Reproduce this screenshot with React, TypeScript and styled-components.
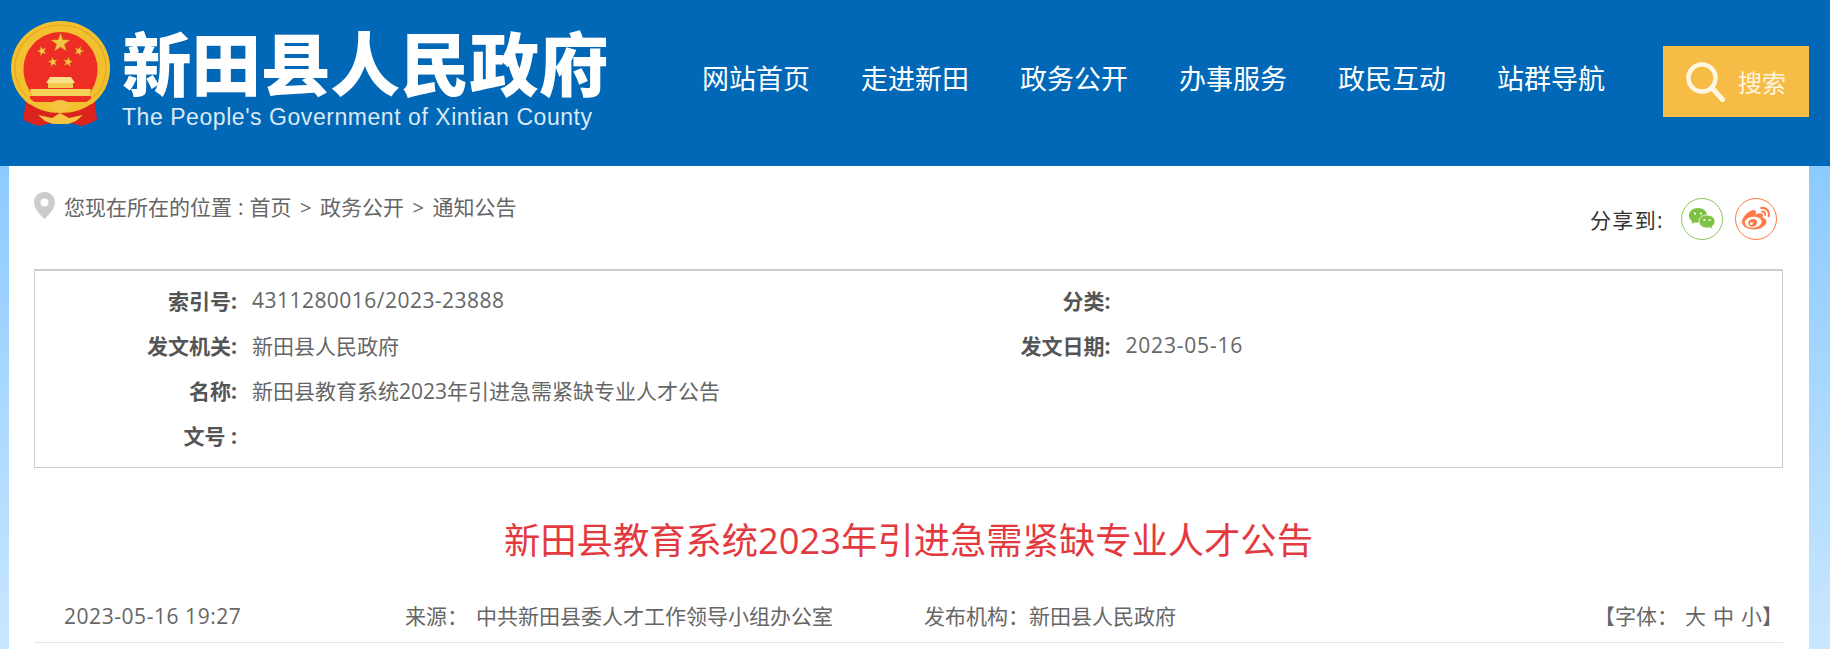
import React from 'react';
import styled, { createGlobalStyle } from 'styled-components';
import { FaWeibo } from 'react-icons/fa';

const GlobalStyle = createGlobalStyle`
  html, body {
    margin: 0;
    padding: 0;
    height: 100%;
    overflow: hidden;
  }
  body {
    font-family: "Open Sans", "Noto Sans CJK SC", sans-serif;
    background: linear-gradient(180deg, #8ccaff 0%, #8ccaff 166px, #c9e7ff 100%);
  }
`;

const Page = styled.div`
  min-height: 100vh;
  display: flex;
  flex-direction: column;
`;

const Header = styled.header`
  height: 166px;
  flex: none;
  background: #0068b7;
  display: flex;
  align-items: center;
`;

const Logo = styled.div`
  display: flex;
  align-items: flex-start;
  gap: 12px;
  margin: 0 0 16px 11px;
`;

const LogoText = styled.div`
  display: flex;
  flex-direction: column;
  padding-top: 4px;
`;

const LogoTitle = styled.div`
  font-family: "Noto Sans CJK SC", sans-serif;
  font-size: 69.5px;
  line-height: 72px;
  font-weight: 900;
  color: #fff;
  white-space: nowrap;
`;

const LogoSub = styled.div`
  margin-top: 8px;
  font-family: "Liberation Sans", sans-serif;
  font-size: 23px;
  line-height: 24px;
  letter-spacing: 0.55px;
  color: #dce9f4;
  white-space: nowrap;
`;

const Nav = styled.nav`
  margin: 0 58px 8px auto;
  display: flex;
  gap: 51px;
`;

const NavItem = styled.a`
  font-size: 27px;
  line-height: 36px;
  color: #fff;
  white-space: nowrap;
`;

const SearchButton = styled.div`
  width: 146px;
  height: 71px;
  margin: 0 21px 3px 0;
  background: #f6bc46;
  display: flex;
  align-items: center;
  padding-left: 23px;
  box-sizing: border-box;
  color: #fff6e2;
  font-size: 24px;
  gap: 13px;
`;

const Panel = styled.main`
  flex: 1;
  margin: 0 21px 0 9px;
  padding: 0 26px 0 25px;
  background: #fff;
`;

const TopRow = styled.div`
  height: 103px;
  display: flex;
  justify-content: space-between;
  align-items: flex-start;
`;

const Crumbs = styled.div`
  margin-top: 26px;
  display: flex;
  align-items: center;
  gap: 9px;
  height: 27px;
  font-size: 21px;
  color: #666;
  white-space: nowrap;
`;

const CrumbSep = styled.span`
  padding: 0 8.5px;
  font-size: 20px;
`;

const CrumbColon = styled.span`
  padding: 0 6px 0 6px;
`;

const Share = styled.div`
  margin: 32px 6px 0 0;
  display: flex;
  align-items: center;
  gap: 12px;
  font-size: 21px;
  color: #333;
`;

const ShareLabel = styled.span`
  margin-right: 5px;
  letter-spacing: 1.4px;
`;

const ShareCircle = styled.span<{ $color: string }>`
  width: 42px;
  height: 42px;
  box-sizing: border-box;
  border-radius: 50%;
  border: 1px solid ${props => props.$color};
  color: ${props => props.$color};
  display: flex;
  align-items: center;
  justify-content: center;
  font-size: 28px;
`;

const InfoBox = styled.section`
  height: 199px;
  box-sizing: border-box;
  border: 1px solid #ccc;
  border-top-width: 2px;
  padding-top: 6px;
  display: grid;
  grid-template-columns: 1fr 1fr;
  grid-auto-rows: 45px;
  font-size: 21px;
  color: #666;
`;

const InfoCell = styled.div`
  display: flex;
  align-items: center;
  gap: 15px;
  white-space: nowrap;
`;

const InfoCellWide = styled(InfoCell)`
  grid-column: 1 / 3;
`;

const InfoLabel = styled.span`
  width: 202px;
  flex: none;
  text-align: right;
  font-weight: 700;
  color: #555;
`;

const NumberText = styled.span<{ $spacing: number }>`
  letter-spacing: ${props => props.$spacing}px;
`;

const ArticleTitle = styled.h1`
  margin: 42px 0 0;
  font-size: 36.3px;
  line-height: 60px;
  font-weight: 400;
  text-align: center;
  color: #e33a3f;
`;

const MetaRow = styled.div`
  margin-top: 25px;
  height: 47px;
  padding-left: 30px;
  border-bottom: 1px solid #e5e5e5;
  display: grid;
  grid-template-columns: 341px 519px 1fr auto;
  line-height: 43px;
  font-size: 21px;
  color: #666;
  white-space: nowrap;
`;

const SourceLabel = styled.span`
  margin-right: 8px;
`;

const FontSize = styled.span`
  margin-left: 7px;
`;

const navItems = ['网站首页', '走进新田', '政务公开', '办事服务', '政民互动', '站群导航'];

const starPoints = (cx: number, cy: number, r: number, rotate = 0) => {
  const pts: string[] = [];
  for (let i = 0; i < 10; i++) {
    const rad = i % 2 === 0 ? r : r * 0.4;
    const a = ((-90 + rotate + i * 36) * Math.PI) / 180;
    pts.push(`${(cx + rad * Math.cos(a)).toFixed(2)},${(cy + rad * Math.sin(a)).toFixed(2)}`);
  }
  return pts.join(' ');
};

const Emblem = () => (
  <svg width="99" height="106" viewBox="11 22 99 106">
    {/* ribbons behind the ring */}
    <path d="M27 96 L23 121 L38 127 L60 122 L83 127 L97 121 L94 96 Z" fill="#dc241f" />
    {/* ring */}
    <path d="M60.5 22 C88 22 110 43 110 69 C110 84 103 97 92 105 L60.5 112 L29 105 C18 97 11 84 11 69 C11 43 33 22 60.5 22 Z" fill="#f3c02f" />
    <path d="M60.5 26 C85 26 106 45 106 69 C106 84 98 96 88 103" fill="none" stroke="#e5a823" strokeWidth="1.2" />
    <path d="M60.5 26 C36 26 15 45 15 69 C15 84 23 96 33 103" fill="none" stroke="#e5a823" strokeWidth="1.2" />
    <path d="M60.5 33 C81 33 97.5 50 97.5 70 C97.5 80 94 89 88 96 H33 C27 89 23.5 80 23.5 70 C23.5 50 40 33 60.5 33 Z" fill="#ee2d24" />
    {/* stars */}
    <polygon points={starPoints(60.5, 44, 10)} fill="#f5c542" stroke="#b5861e" strokeWidth="0.4" />
    <polygon points={starPoints(42, 52, 5, -20)} fill="#f5c542" stroke="#b5861e" strokeWidth="0.3" />
    <polygon points={starPoints(79, 52, 5, 20)} fill="#f5c542" stroke="#b5861e" strokeWidth="0.3" />
    <polygon points={starPoints(53, 63, 5, -10)} fill="#f5c542" stroke="#b5861e" strokeWidth="0.3" />
    <polygon points={starPoints(68, 63, 5, 10)} fill="#f5c542" stroke="#b5861e" strokeWidth="0.3" />
    {/* gate */}
    <path d="M50 78 H71 L75 84 H46 Z" fill="#fbe08a" />
    <rect x="48" y="84" width="25" height="5" fill="#f5c94f" />
    <path d="M30 90 H91 L89 97 H32 Z" fill="#f8d35a" />
    <rect x="30" y="97" width="61" height="6" fill="#ee2d24" />
    <path d="M27 97 C36 106 48 109 60.5 109 C73 109 85 106 94 97 L96 101 C85 111 73 114 60.5 114 C48 114 36 111 25 101 Z" fill="#f3c02f" />
    {/* flower and ties */}
    <ellipse cx="60" cy="107" rx="10" ry="6" fill="#f5c542" />
    <path d="M38 116 L52 119 L60 114 L69 119 L83 116 L76 122 L68 125 H53 L45 122 Z" fill="#f5c542" />
  </svg>
);

const SearchIcon = () => (
  <svg width="39" height="40" viewBox="0 0 39 40" fill="none" stroke="#fff6e2">
    <circle cx="16" cy="16" r="13.5" strokeWidth="4.5" />
    <path d="M26 26 L36.5 37.5" strokeWidth="5" strokeLinecap="round" />
  </svg>
);

const PinIcon = () => (
  <svg width="21" height="27" viewBox="0 0 21 27">
    <path
      fillRule="evenodd"
      d="M10.5 0 C4.7 0 0 4.6 0 10.4 C0 16.8 7 23.5 10.5 27 C14 23.5 21 16.8 21 10.4 C21 4.6 16.3 0 10.5 0 Z M10.5 6.5 A4 4 0 1 1 10.5 14.5 A4 4 0 1 1 10.5 6.5 Z"
      fill="#ccc"
    />
  </svg>
);

const WechatIcon = () => (
  <svg width="26" height="22" viewBox="0 0 26 22">
    <path d="M9 0 C4 0 0 3.2 0 7.4 C0 9.8 1.3 11.9 3.3 13.2 L2.6 16 L6 14.3 C7 14.6 8 14.8 9 14.8 C14 14.8 18 11.5 18 7.4 C18 3.2 14 0 9 0 Z" fill="#7dc242" />
    <circle cx="6" cy="5.6" r="1.1" fill="#fff" />
    <circle cx="12" cy="5.6" r="1.1" fill="#fff" />
    <path d="M18 7 C13.4 7 10 9.9 10 13.5 C10 17.1 13.4 20 18 20 C18.9 20 19.7 19.9 20.5 19.6 L23.5 21.4 L22.8 18.7 C24.8 17.5 26 15.6 26 13.5 C26 9.9 22.6 7 18 7 Z" fill="#7dc242" stroke="#fff" strokeWidth="0.8" />
    <circle cx="15.3" cy="12" r="1" fill="#fff" />
    <circle cx="20.7" cy="12" r="1" fill="#fff" />
  </svg>
);

export default function App() {
  return (
    <Page>
      <GlobalStyle />
      <Header>
        <Logo>
          <Emblem />
          <LogoText>
            <LogoTitle>新田县人民政府</LogoTitle>
            <LogoSub>The People's Government of Xintian County</LogoSub>
          </LogoText>
        </Logo>
        <Nav>
          {navItems.map(item => (
            <NavItem key={item}>{item}</NavItem>
          ))}
        </Nav>
        <SearchButton>
          <SearchIcon />
          搜索
        </SearchButton>
      </Header>

      <Panel>
        <TopRow>
          <Crumbs>
            <PinIcon />
            <span>
              您现在所在的位置<CrumbColon>:</CrumbColon>首页<CrumbSep>&gt;</CrumbSep>政务公开<CrumbSep>&gt;</CrumbSep>通知公告
            </span>
          </Crumbs>
          <Share>
            <ShareLabel>分享到:</ShareLabel>
            <ShareCircle $color="#8cc85a">
              <WechatIcon />
            </ShareCircle>
            <ShareCircle $color="#ff7a45">
              <FaWeibo />
            </ShareCircle>
          </Share>
        </TopRow>

        <InfoBox>
          <InfoCell>
            <InfoLabel>索引号:</InfoLabel>
            <NumberText $spacing={0.47}>4311280016/2023-23888</NumberText>
          </InfoCell>
          <InfoCell>
            <InfoLabel>分类:</InfoLabel>
          </InfoCell>
          <InfoCell>
            <InfoLabel>发文机关:</InfoLabel>
            新田县人民政府
          </InfoCell>
          <InfoCell>
            <InfoLabel>发文日期:</InfoLabel>
            <NumberText $spacing={0.8}>2023-05-16</NumberText>
          </InfoCell>
          <InfoCellWide>
            <InfoLabel>名称:</InfoLabel>
            新田县教育系统2023年引进急需紧缺专业人才公告
          </InfoCellWide>
          <InfoCellWide>
            <InfoLabel>文号 :</InfoLabel>
          </InfoCellWide>
        </InfoBox>

        <ArticleTitle>新田县教育系统2023年引进急需紧缺专业人才公告</ArticleTitle>

        <MetaRow>
          <NumberText $spacing={0.55}>2023-05-16 19:27</NumberText>
          <span>
            <SourceLabel>来源：</SourceLabel>中共新田县委人才工作领导小组办公室
          </span>
          <span>发布机构：新田县人民政府</span>
          <span>
            【字体：<FontSize>大</FontSize>
            <FontSize>中</FontSize>
            <FontSize>小</FontSize>】
          </span>
        </MetaRow>
      </Panel>
    </Page>
  );
}
